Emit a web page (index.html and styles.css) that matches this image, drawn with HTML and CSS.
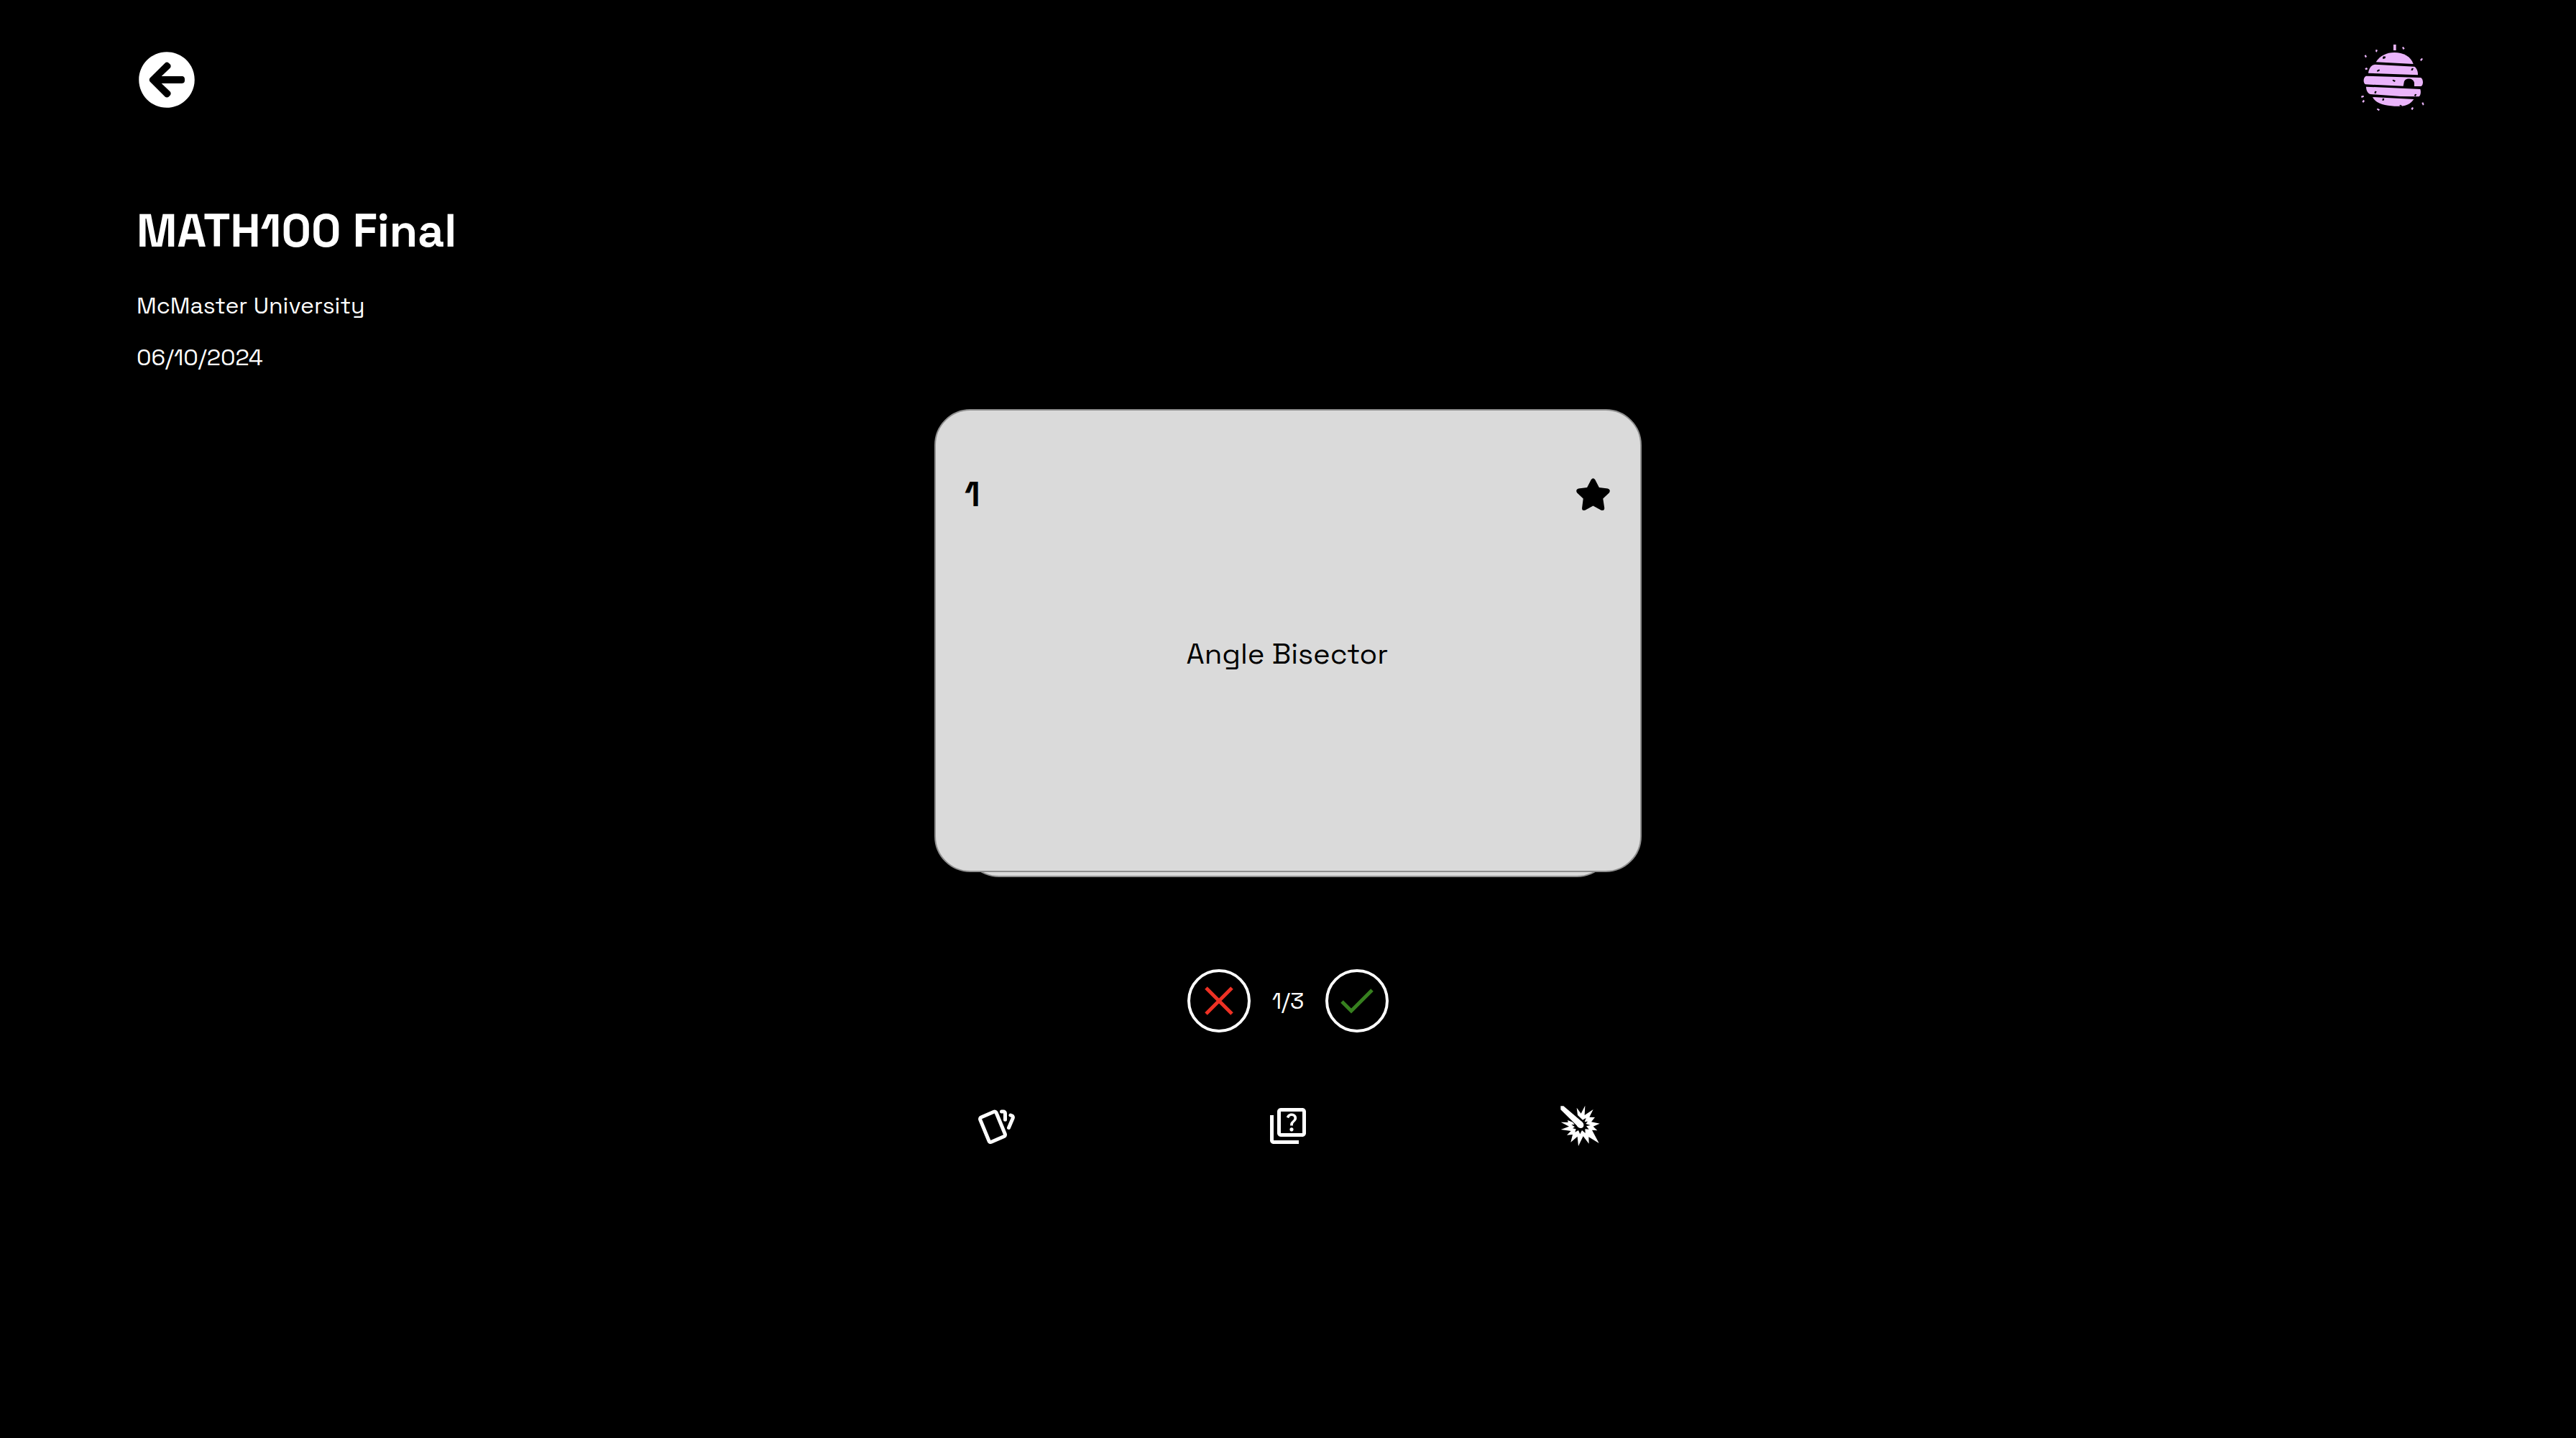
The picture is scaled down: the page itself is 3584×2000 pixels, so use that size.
FILE: index.html
```html
<!DOCTYPE html>
<html lang="en">
<head>
  <meta charset="utf-8">
  <meta name="viewport" content="width=device-width, initial-scale=1">
  <title>MATH100 Final</title>
  <link rel="stylesheet" href="styles.css">
</head>
<body>
  <header class="topbar">
    <a class="back" href="#" aria-label="Back">
      <svg viewBox="0 0 512 512" fill="currentColor"><path d="M256 504C119 504 8 393 8 256S119 8 256 8s248 111 248 248-111 248-248 248zm28.9-143.6L209.4 288H392c13.3 0 24-10.7 24-24v-16c0-13.3-10.7-24-24-24H209.4l75.5-72.4c9.7-9.3 9.9-24.8.4-34.3l-11-10.9c-9.4-9.4-24.6-9.4-33.9 0L107.7 239c-9.4 9.4-9.4 24.6 0 33.9l132.7 132.7c9.4 9.4 24.6 9.4 33.9 0l11-10.9c9.5-9.5 9.3-25-.4-34.3z"/></svg>
    </a>
    <a class="logo" href="#" aria-label="Home">
      <svg viewBox="6 3 360 360" fill="currentColor">
        <path d="M107 109C123 83 151 69 184 69c36 0 69 16 79 48Z"/>
        <path d="M75 155C77 137 87 120 103 119L268 128C277 134 283 148 282 163Z"/>
        <path d="M66 167L293 174C306 176 306 208 295 210H267V196C264 173 226 173 224 194L221 209L63 202C53 197 53 172 66 167Z"/>
        <path d="M66 212L292 222C296 235 293 251 286 253L210 252L84 243C71 239 66 225 66 212Z"/>
        <path d="M93 255L265 264C252 284 231 293 210 293H184C146 291 106 284 93 255Z"/>
        <path d="M180 36h11v24h-11zM107 56l7 3-4 9-5-4zM216 48l6-3 5 8-6 4zM59 82l6-3 4 8-6 4zM291 100l7-8 5 4-7 9zM61 135l8-3 4 7-9 3zM45 251l10-3 2 6-10 4zM49 273l7-7 4 6-6 7zM110 306l4-4 9 5-4 6zM253 305l5-8 6 3-4 9zM298 279l6-2 4 9-5 4z"/>
        <path class="crater" d="M135 89l4-4 9 1-3 8-9 2zM111 144l10-5 2 6-10 5zM253 143l4-9 7 1-4 9zM175 185l5-3 9 5-5 5zM100 238l3-8 7 1-4 10zM266 248l5-6 6 2-5 8zM133 269l2-9 7 2-3 8zM204 291l5-4 7 4-3 4z"/>
      </svg>
    </a>
  </header>

  <main class="deck">
    <section class="intro">
      <h1>MATH100 Final</h1>
      <p>McMaster University</p>
      <p>06/10/2024</p>
    </section>

    <section class="study">
      <div class="stack">
        <article class="card">
          <div class="card-head">
            <span class="number">1</span>
            <button class="star" type="button" aria-label="Star this card">
              <svg viewBox="0 0 140 140" fill="currentColor"><path d="M62 6Q70 -4 78 6L95 39L131 43Q144 47 137 60L111 85L117 124Q116 136 104 133L70 115L36 133Q24 136 24 124L29 85L3 60Q-4 47 9 43L45 39Z"/></svg>
            </button>
          </div>
          <p class="term">Angle Bisector</p>
        </article>
      </div>

      <div class="answer">
        <button class="mark wrong" type="button" aria-label="I did not know it">
          <svg viewBox="0 0 80 80" fill="none" stroke="currentColor" stroke-width="5"><path d="M22 22L58 58M58 22L22 58"/></svg>
        </button>
        <span class="count">1/3</span>
        <button class="mark right" type="button" aria-label="I knew it">
          <svg viewBox="0 0 80 80" fill="none" stroke="currentColor" stroke-width="5"><path d="M19 41L32 54L61 25"/></svg>
        </button>
      </div>

      <nav class="modes">
        <a href="#" aria-label="Flashcards">
          <svg viewBox="0 0 24 24" fill="none" stroke="currentColor" stroke-width="2" stroke-linecap="round" stroke-linejoin="round"><path d="M3.604 7.197l7.138-3.109a.96.96 0 0 1 1.27.527l4.924 11.902a1 1 0 0 1-.514 1.304l-7.137 3.109a.96.96 0 0 1-1.271-.527L3.09 8.5a1 1 0 0 1 .514-1.304zM15 4h1a1 1 0 0 1 1 1v3.5M20 6c.264.112.52.217.768.315a1 1 0 0 1 .53 1.311L19 13"/></svg>
        </a>
        <a href="#" aria-label="Quiz">
          <svg viewBox="0 0 24 24" fill="currentColor"><path d="M4 6H2v14c0 1.1.9 2 2 2h14v-2H4V6z"/><path d="M20 2H8c-1.1 0-2 .9-2 2v12c0 1.1.9 2 2 2h12c1.1 0 2-.9 2-2V4c0-1.1-.9-2-2-2zm0 14H8V4h12v12z"/><path d="M13.51 10.16c.41-.73 1.18-1.16 1.63-1.8.48-.68.21-1.94-1.14-1.94-.88 0-1.32.67-1.5 1.23l-1.37-.57C11.51 5.96 12.52 5 13.99 5c1.23 0 2.08.56 2.51 1.26.37.6.58 1.73.01 2.57-.63.93-1.23 1.21-1.56 1.81-.13.24-.18.4-.18 1.18h-1.52c.01-.41-.06-1.08.26-1.66zm-.56 3.79c0-.59.47-1.04 1.05-1.04.59 0 1.04.45 1.04 1.04 0 .58-.44 1.05-1.04 1.05-.58 0-1.05-.47-1.05-1.05z"/></svg>
        </a>
        <a href="#" aria-label="Match">
          <svg viewBox="0 6 180 180" fill="currentColor"><path d="M77 20L95 44L112 11L110 51L146 27L130 59L153 60L138 79L173 86L146 98L163 115L141 113L170 168L127 142L128 170L104 139L84 180L80 140L52 164L60 132L36 134L53 117L11 111L45 98L11 80L41 81L39 72L60 80L68 90L55 91L69 100L60 106L74 109L70 122L84 114L91 130L99 114L113 126L112 109L128 110L117 97L134 93L115 87L123 77L110 79L116 63L102 71L81 51Z"/><path d="M10 13L22 13L95 75C107 83 109 94 103 102C95 109 81 104 77 94L10 28Z"/></svg>
        </a>
      </nav>
    </section>
  </main>
</body>
</html>
```
FILE: styles.css
```css
* {
  box-sizing: border-box;
}

body {
  margin: 0;
  min-height: 100vh;
  background: #000;
  color: #fff;
  font-family: "Space Grotesk", Inter, "Liberation Sans", sans-serif;
  font-size: 32px;
  line-height: 40px;
}

h1,
p {
  margin: 0;
}

a,
button {
  display: block;
  padding: 0;
  border: 0;
  background: none;
  color: inherit;
}

svg {
  display: block;
  width: 100%;
}

.topbar {
  display: flex;
  align-items: center;
  justify-content: space-between;
  padding: 51px 192px 0;
}

.back {
  width: 80px;
}

.logo {
  width: 120px;
  color: #eab4fa;
}

.crater {
  fill: #000;
}

.intro {
  display: grid;
  gap: 32px;
  padding: 109px 190px 0;
}

h1 {
  margin-bottom: 11px;
  font-size: 64px;
  line-height: 82px;
  font-weight: 700;
}

.study {
  width: 984px;
  max-width: 100%;
  margin: 52px auto 0;
}

.stack {
  position: relative;
  padding-bottom: 7px;
}

/* edge of the next card, showing under the current one */
.stack::before {
  content: "";
  position: absolute;
  inset: 40px 40px 0;
  border: 2px solid #8f8f8f;
  border-radius: 50px;
  background: #dadada;
}

.card {
  position: relative;
  min-height: 644px;
  padding: 87px 42px 40px 40px;
  border: 2px solid #8f8f8f;
  border-radius: 50px;
  background: #dadada;
  color: #000;
}

.card-head {
  display: flex;
  align-items: center;
  justify-content: space-between;
}

.number {
  font-size: 48px;
  line-height: 60px;
  font-weight: 700;
}

.star {
  width: 47px;
}

.term {
  margin-top: 166px;
  font-size: 40px;
  line-height: 52px;
  text-align: center;
}

.answer {
  display: flex;
  align-items: center;
  justify-content: center;
  margin-top: 128px;
}

.count {
  width: 104px;
  text-align: center;
}

.mark {
  width: 88px;
  border: 4px solid #fff;
  border-radius: 50%;
}

.wrong {
  color: #ee3124;
}

.right {
  color: #37801f;
}

.modes {
  display: flex;
  justify-content: space-between;
  margin-top: 100px;
  padding: 0 56px;
}

.modes a {
  width: 60px;
}
```
